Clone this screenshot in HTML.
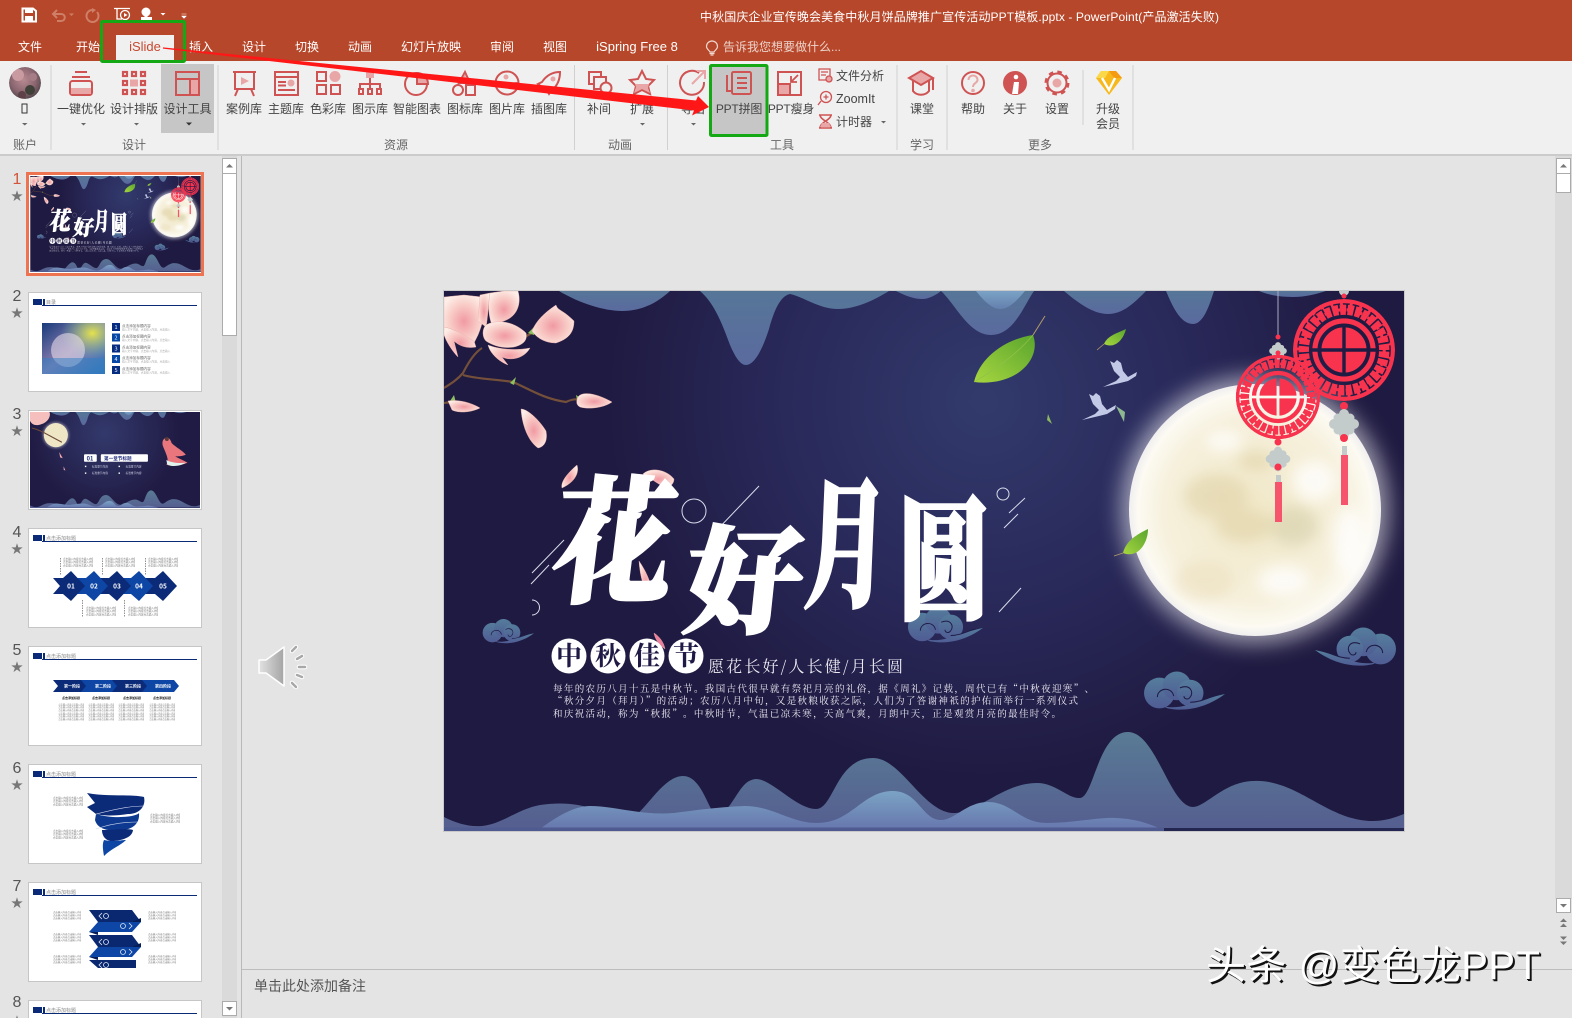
<!DOCTYPE html>
<html lang="zh"><head><meta charset="utf-8"><title>PowerPoint</title>
<style>
html,body{margin:0;padding:0;width:1572px;height:1018px;overflow:hidden;background:#e4e4e4}
#r{position:absolute;left:0;top:0;width:1572px;height:1018px;overflow:hidden;background:#e4e4e4;font-family:"Liberation Sans","Noto Sans CJK SC",sans-serif}
.a{position:absolute}
.th{position:absolute;left:28px;width:174px;height:100px;background:#fff}
.n{position:absolute;left:8px;width:18px;text-align:center;font-size:16px;line-height:16px;color:#555}
.st{position:absolute;left:8px;width:18px;text-align:center;font-size:12px;line-height:12px;color:#777}
</style></head><body><div id="r">
<svg width="0" height="0" style="position:absolute">
<defs>
<radialGradient id="bg" gradientUnits="userSpaceOnUse" cx="540" cy="110" r="400"><stop offset="0" stop-color="#323a6c"/><stop offset=".5" stop-color="#29295a"/><stop offset=".95" stop-color="#1f1a41"/></radialGradient>
<linearGradient id="dr" x1="0" y1="0" x2="0" y2="1"><stop offset="0" stop-color="#567698"/><stop offset="1" stop-color="#5a6a9e"/></linearGradient>
<linearGradient id="dr2" x1="0" y1="0" x2="0" y2="1"><stop offset="0" stop-color="#7ba2c6"/><stop offset="1" stop-color="#6480ad"/></linearGradient>
<linearGradient id="m1" gradientUnits="userSpaceOnUse" x1="0" y1="441" x2="0" y2="535"><stop offset="0" stop-color="#587b95"/><stop offset="1" stop-color="#555f90"/></linearGradient>
<linearGradient id="m2" gradientUnits="userSpaceOnUse" x1="0" y1="500" x2="0" y2="538"><stop offset="0" stop-color="#7ba3c4"/><stop offset="1" stop-color="#6777ae"/></linearGradient>
<linearGradient id="lf" x1="0" y1="1" x2="1" y2="0"><stop offset="0" stop-color="#a7d63f"/><stop offset="1" stop-color="#5aa52e"/></linearGradient>
<linearGradient id="cl" x1="0" y1="0" x2="0" y2="1"><stop offset="0" stop-color="#557d9c"/><stop offset="1" stop-color="#4f5c94"/></linearGradient>
<radialGradient id="pt" cx=".5" cy=".55" r=".6"><stop offset="0" stop-color="#f09aa2"/><stop offset=".6" stop-color="#f9cdc8"/><stop offset="1" stop-color="#fdeee8"/></radialGradient>
<radialGradient id="mn" cx=".5" cy=".5" r=".5"><stop offset="0" stop-color="#f1e8c8"/><stop offset=".72" stop-color="#f6f0dc"/><stop offset=".93" stop-color="#fcfaf2"/><stop offset="1" stop-color="#f1eff0"/></radialGradient>
<radialGradient id="av" cx=".45" cy=".4" r=".65"><stop offset="0" stop-color="#b98a92"/><stop offset=".6" stop-color="#8a6670"/><stop offset="1" stop-color="#4c4248"/></radialGradient>
<filter id="b4"><feGaussianBlur stdDeviation="7"/></filter>
<filter id="b14"><feGaussianBlur stdDeviation="11"/></filter>
<mask id="dm" maskUnits="userSpaceOnUse" x="-53" y="-53" width="106" height="106">
<circle r="52" fill="#fff"/>
<g fill="none">
<circle r="41" stroke="#000" stroke-width="12" stroke-dasharray="1.6 6.2"/>
<circle r="41" stroke="#fff" stroke-width="3.2" stroke-dasharray="5 6.5"/>
<circle r="47" stroke="#000" stroke-width="1.4" stroke-dasharray="7 3"/>
<circle r="34" stroke="#000" stroke-width="3.500"/>
<circle r="25" stroke="#000" stroke-width="4"/>
<path d="M-33 0H33M0-26V26" stroke="#000" stroke-width="3.500"/>
</g></mask>
<symbol id="disk" viewBox="-53 -53 106 106" overflow="visible"><circle r="52" fill="#f8334e" mask="url(#dm)"/></symbol>
<symbol id="knot" viewBox="-17 -17 34 34"><g fill="#c3ccca"><circle cx="-10" r="5"/><circle cx="10" r="5"/><circle cy="-10" r="5"/><circle cy="10" r="5"/><circle r="7"/><circle cx="-6" cy="-6" r="4.5"/><circle cx="6" cy="-6" r="4.5"/><circle cx="-6" cy="6" r="4.5"/><circle cx="6" cy="6" r="4.5"/></g></symbol>
<symbol id="cloudA" viewBox="0 0 80 40"><g fill="url(#cl)"><circle cx="16" cy="21" r="15"/><circle cx="33" cy="14" r="14"/><circle cx="46" cy="21" r="13"/><path d="M20 34C40 38 52 28 80 22C64 34 44 40 24 36Z"/></g><g fill="none" stroke="#1f1b45" stroke-width="1"><path d="M14 25C14 16 28 14 30 24"/><path d="M36 16C46 12 50 20 46 25C44 28 40 27 40 24"/><path d="M46 30C56 30 62 26 72 23"/></g></symbol>
<symbol id="mnt" viewBox="0 0 960 540">
<path fill="url(#m1)" d="M0 526C12 532 24 536 38 535C58 533 74 518 96 514C110 512 122 512 134 514C155 518 172 528 186 527C200 524 218 485 239 485C255 485 262 510 268 519C272 524 280 522 286 514C296 500 300 489 312 488C328 488 352 518 372 518C390 518 392 467 429 467C458 467 480 524 512 522C536 520 560 492 593 492C612 492 624 508 636 507C650 506 654 441 684 441C712 441 726 516 749 516C760 516 776 496 800 491C850 482 880 530 929 530C942 530 952 526 960 523V540H0Z"/>
<path fill="url(#m2)" d="M96 538C112 526 130 515 146 515C170 515 200 525 230 522C260 518 278 516 300 515C330 515 346 532 373 532C408 532 418 500 449 500C474 500 478 528 496 529C510 530 522 511 544 511C568 511 576 532 603 532C630 532 655 526 672 527C695 528 708 534 722 540H96Z"/>
<rect y="536.500" width="720" height="3.500" fill="#4f5a90"/><rect x="720" y="537" width="240" height="3" fill="#252552"/>
</symbol>
<symbol id="drp" viewBox="0 0 960 540">
<path fill="url(#dr)" d="M115 0C135 12 160 20 178 20C200 20 215 10 226 0Z"/>
<path fill="url(#dr)" d="M256 0C270 12 278 32 286 54C292 68 297 74 302 74C310 74 318 60 325 38C330 20 336 5 346 3C360 6 375 18 394 18C415 18 435 6 445 0Z"/>
<path fill="url(#dr)" d="M452 0C462 5 470 8 478 8C485 8 492 4 497 0Z"/>
<path fill="url(#dr)" d="M497 0C512 14 525 44 547 44C570 44 580 14 590 0Z"/>
<path fill="url(#dr2)" d="M532 0C540 10 548 18 556 18C566 18 574 8 581 0Z"/>
<path fill="url(#dr)" d="M620 0C632 10 648 23 664 23C680 23 692 10 702 0Z"/>
<path fill="url(#dr)" d="M722 0C728 14 736 33 749 33C760 33 766 12 770 0Z"/>
<path fill="url(#dr)" d="M815 0C825 4 835 6 849 6C862 6 872 3 882 0Z"/>
</symbol>
<symbol id="slide" viewBox="0 0 960 540">
<rect width="960" height="540" fill="url(#bg)"/>
<use href="#drp" width="960" height="540"/>
<use href="#mnt" width="960" height="540"/>
<!-- clouds -->
<use href="#cloudA" x="38" y="325" width="52" height="32"/>
<use href="#cloudA" x="462" y="316" width="78" height="38"/>
<use href="#cloudA" x="699" y="379" width="82" height="44"/>
<g transform="translate(953,333) scale(-1,1)"><use href="#cloudA" width="82" height="48"/></g>
<!-- moon -->
<circle cx="811" cy="219" r="134" fill="#fff" opacity=".55" filter="url(#b14)"/>
<circle cx="811" cy="219" r="126" fill="url(#mn)"/>
<g filter="url(#b4)" fill="#dccd9e" opacity=".5"><ellipse cx="772" cy="205" rx="32" ry="22"/><ellipse cx="812" cy="170" rx="18" ry="10"/><ellipse cx="850" cy="235" rx="24" ry="20" fill="#cfc9a2"/><ellipse cx="760" cy="290" rx="30" ry="20" fill="#eadcb8"/><ellipse cx="800" cy="235" rx="28" ry="16"/></g>
<g filter="url(#b4)" fill="#fff" opacity=".75"><ellipse cx="870" cy="190" rx="22" ry="20"/><ellipse cx="905" cy="250" rx="16" ry="34"/><ellipse cx="840" cy="290" rx="26" ry="16"/><ellipse cx="780" cy="150" rx="18" ry="10"/></g>
<!-- lanterns -->
<path d="M834 0V45" stroke="#aab" stroke-width="1"/>
<use href="#knot" x="824" y="50" width="20" height="20"/><circle cx="834" cy="46" r="2.500" fill="#f8334e"/><circle cx="834" cy="62" r="2.500" fill="#f8334e"/>
<use href="#disk" x="791" y="63" width="86" height="86"/>
<circle cx="834" cy="151" r="3.500" fill="#f8334e"/>
<use href="#knot" x="820" y="154" width="28" height="28"/>
<circle cx="834" cy="176" r="3.500" fill="#f8334e"/>
<rect x="832" y="184" width="5" height="7" fill="#c3ccca"/><rect x="831" y="191" width="7" height="40" fill="#f6536c"/>
<circle cx="900" cy="0" r="5" fill="#c3ccca"/><circle cx="900" cy="5" r="2.500" fill="#f8334e"/>
<use href="#disk" x="848" y="7" width="104" height="104"/>
<circle cx="900" cy="115" r="4" fill="#f8334e"/>
<use href="#knot" x="883" y="116" width="34" height="34"/>
<circle cx="900" cy="147" r="4" fill="#f8334e"/>
<rect x="898" y="155" width="5" height="9" fill="#c3ccca"/><rect x="897" y="164" width="7" height="50" fill="#f6536c"/>
<!-- leaves, birds -->
<path d="M589 44L601 25" stroke="#b59a6a" stroke-width="1"/>
<path fill="url(#lf)" d="M530 91C536 66 562 48 589 44C598 68 572 96 530 91Z"/><path d="M530 91C552 78 574 62 589 44" stroke="#8fc24a" stroke-width=".7" fill="none"/>
<path fill="url(#lf)" d="M660 53C664 44 674 42 682 38C679 50 670 58 660 53Z"/><path d="M653 59L660 53" stroke="#b59a6a" stroke-width=".8"/>
<path fill="url(#lf)" d="M679 262C682 250 692 244 704 238C704 252 694 268 679 262Z"/><path d="M670 265L679 262" stroke="#b59a6a" stroke-width=".8"/>
<path fill="#8cb860" d="M604 123L608 133L603 129Z"/><path fill="#8cc25a" d="M656 115L662 119L656 121Z"/><path fill="#8db890" d="M672 115L681 121L680 131Z"/>
<g fill="#c2c9e6"><path d="M666 70L670 72L673 69L677 72L679 80L684 86L693 81L692 85L684 90L676 92L659 96L672 90L676 86L670 80Z"/><path d="M645 103L649 105L652 102L656 105L658 113L663 119L672 114L671 118L663 123L655 125L638 129L651 123L655 119L649 113Z"/></g>
<!-- branch & flowers -->
<g fill="none" stroke="#74503a" stroke-width="2.200"><path d="M0 97C8 92 14 88 19 82C24 72 30 62 38 57"/><path d="M19 84C32 88 50 88 69 91C85 98 100 108 122 111C128 108 134 108 138 109"/><path d="M0 112L8 111"/><path d="M66 54L88 42"/></g>
<g fill="#8fc060"><path d="M84 42L92 34L90 44Z"/><path d="M138 108L132 104L134 114L140 116Z"/><path d="M6 110L10 104L12 112Z"/><path d="M66 92L72 86L70 94Z"/></g>
<g fill="url(#pt)" stroke="#eeb0ac" stroke-width=".4">
<path d="M0 6L20 4L38 6C42 16 40 30 34 44L30 52C20 44 10 38 0 36Z"/>
<path d="M0 36C10 38 20 44 30 50L32 56C22 58 14 54 10 50L14 66C8 60 2 50 0 44Z"/>
<path d="M46 2L60 0L74 0C78 14 72 26 60 30L48 34C44 24 44 12 46 2Z"/>
<path d="M36 4L46 2C44 14 44 26 42 36L34 30Z"/>
<path d="M42 34C52 28 70 30 82 42C84 50 78 54 70 56C58 58 48 54 42 50C38 46 38 38 42 34Z"/>
<path d="M44 54C54 58 70 60 86 57C80 68 66 70 58 66L64 74C54 70 46 62 44 54Z"/>
<path d="M88 40C92 30 100 22 112 14C114 20 118 18 130 30C130 42 124 48 112 52C100 52 92 46 88 40Z"/>
<path d="M134 106C138 100 152 102 168 111C158 118 142 118 136 116C132 114 132 110 134 106Z"/>
<path d="M4 110C14 108 28 112 36 117C26 122 14 122 8 119Z"/>
<path d="M77 118C84 118 96 130 102 140C104 150 100 156 94 157C84 150 78 134 77 118Z"/>
<path d="M133 174C135 180 133 190 118 197C116 190 126 180 133 174Z"/>
<path d="M199 183C206 176 222 178 230 188C230 194 224 198 218 195C210 190 204 186 199 183Z"/>
<path d="M195 270C202 280 210 296 208 310C200 300 196 286 195 270Z"/>
<path d="M210 342C216 346 220 352 221 358C215 354 211 348 210 342Z" fill="#ec7f9a"/>
</g>
<!-- decorative lines -->
<g fill="none" stroke="#d9dcec" stroke-width="1"><path d="M273 239L315 195M88 282L120 249M87 293L105 274M565 222L581 207M560 237L574 223M555 321L577 297"/><circle cx="250" cy="220" r="12"/><circle cx="559" cy="203" r="6"/><path d="M88 309A7.500 7.500 0 0 1 88 324"/></g>
<!-- title -->
<g fill="#fff" stroke="#fff" stroke-width="3" font-family="'Noto Serif CJK SC','Noto Sans CJK SC',serif" font-weight="900">
<text transform="translate(105,300) scale(.88,1) skewX(-8)" font-size="136">花</text>
<text transform="translate(238,332) skewX(-6)" font-size="116">好</text>
<text transform="translate(358,304) scale(.6,1) skewX(-4)" font-size="140">月</text>
<text transform="translate(452,317) scale(.72,1)" font-size="132">圆</text>
</g>
<!-- sub title -->
<g fill="#fff"><circle cx="125" cy="365" r="17.500"/><circle cx="164" cy="365" r="17.500"/><circle cx="203" cy="365" r="17.500"/><circle cx="242" cy="365" r="17.500"/></g>
<g fill="#1f1a45" font-size="26" font-weight="700" text-anchor="middle" font-family="'Noto Serif CJK SC',serif"><text x="125" y="374">中</text><text x="164" y="374">秋</text><text x="203" y="374">佳</text><text x="242" y="374">节</text></g>
<g fill="#eceaf2" font-family="'Noto Serif CJK SC',serif">
<text x="264" y="381" font-size="16" textLength="195" lengthAdjust="spacing">愿花长好/人长健/月长圆</text>
<g font-size="9.500"><text x="109" y="401" textLength="541" lengthAdjust="spacing">每年的农历八月十五是中秋节。我国古代很早就有祭祀月亮的礼俗，据《周礼》记载，周代已有“中秋夜迎寒”、</text>
<text x="109" y="413" textLength="525" lengthAdjust="spacing">“秋分夕月（拜月）”的活动；农历八月中旬，又是秋粮收获之际，人们为了答谢神祇的护佑而举行一系列仪式</text>
<text x="109" y="426" textLength="508" lengthAdjust="spacing">和庆祝活动，称为“秋报”。中秋时节，气温已凉未寒，天高气爽，月朗中天，正是观赏月亮的最佳时令。</text></g>
</g>
</symbol>
<symbol id="hd" viewBox="0 0 174 100"><rect x="5" y="7" width="9" height="6" fill="#0a2a78"/><rect x="15" y="7" width="2" height="6" fill="#0a2a78"/><path d="M14 13.500H169" stroke="#0a2a78" stroke-width="1"/></symbol>
<symbol id="tb" viewBox="0 0 30 12"><g font-size="2.600" fill="#777"><text x="0" y="3">点击输入内容点击输入内容点击</text><text x="0" y="6.200">点击输入内容点击输入内容点击</text><text x="0" y="9.400">点击输入内容点击输入内容点击</text></g></symbol>
</defs>
</svg>

<!-- Title bar -->
<div class="a" style="left:0;top:0;width:1572px;height:61px;background:#b7472a"></div>
<div class="a" style="left:0;top:61px;width:1572px;height:93px;background:#f0f0f0"></div>
<div class="a" style="left:0;top:154px;width:1572px;height:2px;background:#cbcbcb"></div>
<div class="a" style="left:116px;top:35px;width:58px;height:26px;background:#f0f0f0"></div>
<div class="a" style="left:161px;top:64px;width:53px;height:69px;background:#c6c6c6"></div>
<div class="a" style="left:711px;top:65px;width:56px;height:70px;background:#c6c6c6"></div>

<svg class="a" style="left:0;top:0" width="1572" height="156" viewBox="0 0 1572 156" font-family="'Liberation Sans','Noto Sans CJK SC',sans-serif">
<defs><clipPath id="avc"><circle cx="25" cy="83" r="16"/></clipPath></defs>
<!-- QAT -->
<g>
<path d="M22.500 8.500H33L36 11V21.500H22.500Z" fill="none" stroke="#fff" stroke-width="2"/><rect x="25" y="9" width="8" height="4" fill="#fff"/><rect x="25" y="16" width="8" height="5" fill="#fff"/>
<g fill="none" stroke="#cf7f68" stroke-width="2"><path d="M53 14H61C66 14 66 21 61 21H57"/><path d="M57 10L53 14L57 18"/><path d="M92 10A6 6 0 1 0 97 12"/></g>
<path d="M69 13.500H74L71.500 16Z" fill="#cf7f68"/><path d="M92 8V13L96 10Z" fill="#cf7f68"/>
<g fill="none" stroke="#fff" stroke-width="1.300"><path d="M114 8.500H130M117 9V19H122"/><circle cx="125" cy="15" r="4.500"/></g><path d="M124 13L127.500 15L124 17Z" fill="#fff"/>
<circle cx="146" cy="12" r="4.500" fill="#fff"/><path d="M144.500 12H147.500V17H152V20H141V17H144.500Z" fill="#fff"/>
<path d="M160.500 13H165.500L163 15.500Z" fill="#fff"/>
<path d="M181.500 14H186.500M181.500 16H186.500L184 18.500Z" fill="#fff" stroke="#fff" stroke-width=".5"/>
</g>
<text x="700" y="21" font-size="12" fill="#fff" textLength="519" lengthAdjust="spacing">中秋国庆企业宣传晚会美食中秋月饼品牌推广宣传活动PPT模板.pptx - PowerPoint(产品激活失败)</text>
<!-- Tabs -->
<g font-size="12" fill="#fff" text-anchor="middle">
<text x="30" y="51">文件</text><text x="88" y="51">开始</text><text x="201" y="51">插入</text><text x="254" y="51">设计</text><text x="307" y="51">切换</text><text x="360" y="51">动画</text><text x="431" y="51">幻灯片放映</text><text x="502" y="51">审阅</text><text x="555" y="51">视图</text><text x="637" y="51" font-size="13">iSpring Free 8</text>
</g>
<text x="145" y="51" font-size="13" fill="#c9482e" text-anchor="middle">iSlide</text>
<g fill="none" stroke="#f0d8d0" stroke-width="1.200"><path d="M710 52C709 50 706.500 49 706.500 46.500A5.500 5.500 0 1 1 717.500 46.500C717.500 49 715 50 714 52Z"/><path d="M709.500 53.500H714.500M710.500 55H713.500"/></g>
<text x="723" y="51" font-size="12" fill="#ecd3ca">告诉我您想要做什么...</text>
<!-- Avatar -->
<g clip-path="url(#avc)"><circle cx="25" cy="83" r="16" fill="url(#av)"/><circle cx="30" cy="90" r="5" fill="#3f4038"/><circle cx="18" cy="75" r="6" fill="#c99aa0"/><circle cx="22" cy="95" r="4" fill="#5d4048"/><circle cx="33" cy="77" r="4" fill="#a67d86"/></g>
<rect x="22" y="104" width="5" height="9" fill="none" stroke="#333" stroke-width="1"/>
<!-- Separators -->
<g stroke="#d0d0d0" stroke-width="1"><path d="M51 65V150M218 65V150M574.500 65V150M667.500 65V150M897 65V150M947 65V150M1133 65V150"/><path d="M1083 70V125"/></g>
<!-- small arrows -->
<g fill="#666"><path d="M22 123H27.500L24.700 125.500Z"/><path d="M81 123H86L83.500 125.500Z"/><path d="M134 123H139L136.500 125.500Z"/><path d="M186 122.500H192L189 125.500Z" fill="#333"/><path d="M640 123H645L642.500 125.500Z"/><path d="M691 123H696L693.500 125.500Z"/><path d="M881 121H886L883.500 123.500Z"/></g>
<!-- Labels -->
<g font-size="12" fill="#444" text-anchor="middle">
<text x="81" y="113">一键优化</text><text x="134" y="113">设计排版</text><text x="187.500" y="113">设计工具</text>
<text x="244" y="113">案例库</text><text x="286" y="113">主题库</text><text x="328" y="113">色彩库</text><text x="370" y="113">图示库</text><text x="417" y="113">智能图表</text><text x="465" y="113">图标库</text><text x="507" y="113">图片库</text><text x="549" y="113">插图库</text>
<text x="599" y="113">补间</text><text x="642" y="113">扩展</text><text x="693" y="113">导出</text>
<text x="739" y="113" letter-spacing="-.2">PPT拼图</text><text x="791" y="113" letter-spacing="-.2">PPT瘦身</text>
<text x="922" y="113">课堂</text><text x="973" y="113">帮助</text><text x="1015" y="113">关于</text><text x="1057" y="113">设置</text><text x="1108" y="113">升级</text><text x="1108" y="128">会员</text>
</g>
<g font-size="12" fill="#444"><text x="836" y="80">文件分析</text><text x="836" y="103" font-size="12.500">ZoomIt</text><text x="836" y="126">计时器</text></g>
<g font-size="12" fill="#666" text-anchor="middle"><text x="25" y="149">账户</text><text x="134" y="149">设计</text><text x="396" y="149">资源</text><text x="620" y="149">动画</text><text x="782" y="149">工具</text><text x="922" y="149">学习</text><text x="1040" y="149">更多</text></g>
<!-- Icons -->
<g fill="none" stroke="#cf5353" stroke-width="2">
<!-- 一键优化 -->
<path d="M75 72H87M72 77H90"/><rect x="70" y="81" width="22" height="14" rx="2.500"/><path d="M71 88H91V94H71Z" fill="#e8a6a6" stroke="none"/>
<!-- 设计工具 -->
<rect x="176" y="72" width="23" height="23"/><path d="M176 79H199M190 79V95"/><rect x="191" y="80" width="7" height="14" fill="#e8a6a6" stroke="none"/>
<!-- 案例库 -->
<path d="M233 72H256M235 72V89H254V72M238 89L235 96M251 89L254 96"/><path d="M241 77L249 81L241 85Z" fill="#e8a6a6" stroke="none"/>
<!-- 主题库 -->
<rect x="275" y="72" width="23" height="23"/><path d="M275 77H298M278 82H286M278 85.500H286M278 90H295"/><circle cx="291" cy="83" r="3.500" fill="#e8a6a6" stroke="none"/>
<!-- 色彩库 -->
<rect x="317" y="72" width="9" height="9"/><rect x="317" y="85" width="9" height="9"/><rect x="331" y="85" width="9" height="9"/><circle cx="335" cy="76.500" r="5.500" fill="#e8a6a6" stroke="none"/>
<!-- 图示库 -->
<rect x="366" y="71" width="8" height="7" fill="#e8a6a6" stroke="none"/><path d="M370 78V83M360 89V84H380V89M370 84V89"/><rect x="359" y="89" width="4" height="5"/><rect x="368" y="89" width="4" height="5"/><rect x="377" y="89" width="4" height="5"/>
<!-- 智能图表 -->
<circle cx="416" cy="84" r="11"/><path d="M417 73A11 11 0 0 1 428 84L417 84Z" fill="#e8a6a6"/>
<!-- 图标库 -->
<path d="M465 72L470 83H459Z"/><circle cx="458" cy="90" r="5"/><rect x="466" y="85" width="9" height="10"/><path d="M465 74L468 83H461Z" fill="#e8a6a6" stroke="none"/>
<!-- 图片库 -->
<circle cx="507" cy="83" r="11.500"/><path d="M496 85L518 83"/><circle cx="506" cy="77" r="2.500" fill="#e8a6a6" stroke="none"/>
<!-- 插图库 -->
<path d="M560 72C552 72 546 76 542 82L538 84L543 88L547 91L549 94L552 90C557 86 560 80 560 72Z"/><circle cx="553" cy="79" r="2.500" fill="#e8a6a6" stroke="none"/>
<!-- 补间 -->
<rect x="589" y="72" width="12" height="12"/><rect x="594" y="77" width="12" height="12" fill="#f0f0f0"/><circle cx="606" cy="88" r="5.500" fill="#f0f0f0"/>
<!-- 扩展 -->
<path d="M642 71L646 79L654 80L648 86L650 94L642 90L634 94L636 86L630 80L638 79Z"/><path d="M635 84H649L648 88L650 93L642 89L634 93L636 87Z" fill="#e8a6a6" stroke="none"/>
<!-- 导出 -->
<path d="M699 73A12 12 0 1 0 704 82"/><g stroke="#e8a6a6"><path d="M692 84L704 72M697 71H705V79"/></g>
<!-- PPT拼图 -->
<rect x="732" y="72" width="19" height="22" rx="1.500"/><path d="M727 75V91H732"/><path d="M737 78H747M737 83H747M737 88H747"/>
<!-- PPT瘦身 -->
<rect x="778" y="72" width="23" height="23"/><rect x="779" y="85" width="10" height="9" fill="#e8a6a6" stroke="none"/><path d="M778 84H790V95"/><path d="M798 75L791 82M791 76V82H797" stroke-width="1.800"/>
<!-- 课堂 -->
<path d="M921 71L933 78L921 85L909 78Z" fill="#e8a6a6"/><path d="M913 81V91C917 96 925 96 929 91V81M933 78V90"/>
<!-- 帮助 -->
<circle cx="973" cy="83" r="11"/><path d="M968.500 80C968.500 74 977.500 74 977.500 80C977.500 83 973 83 973 87" stroke="#e8a6a6"/><circle cx="973" cy="90.500" r=".8" stroke="#e8a6a6"/>
<!-- 设置 -->
<circle cx="1057" cy="83" r="9.500"/><circle cx="1057" cy="83" r="11" stroke-width="3" stroke-dasharray="4.500 4.140"/>
</g>
<!-- 设计排版 -->
<g fill="none" stroke="#cf5353" stroke-width="2.200"><rect x="123" y="72" width="4" height="4"/><rect x="132" y="72" width="4" height="4"/><rect x="141" y="72" width="4" height="4"/><rect x="123" y="81" width="4" height="4"/><rect x="141" y="81" width="4" height="4"/><rect x="123" y="90" width="4" height="4"/><rect x="132" y="90" width="4" height="4"/><rect x="141" y="90" width="4" height="4"/></g>
<rect x="130" y="79.500" width="8" height="7" fill="#e8a6a6"/>
<circle cx="1057" cy="83" r="4.500" fill="#e8a6a6"/>
<circle cx="1015" cy="83" r="12" fill="#cf5353"/><circle cx="1016" cy="77" r="2.300" fill="#fff"/><path d="M1012 94L1014 82H1019L1018 94Z" fill="#fff"/>
<!-- small icons -->
<g fill="none" stroke="#cf5353" stroke-width="1.300"><path d="M819 69H830V80H819Z"/><path d="M821 72H828M821 75H826" /><circle cx="829" cy="79" r="3" fill="#e8a6a6"/>
<circle cx="826" cy="97" r="5.500"/><path d="M821 101L818 105M823.500 97H828.500M826 94.500V99.500" /><path d="M819 115H832M819 128H832M820 115C820 120 831 122 831 128M831 115C831 120 820 122 820 128" stroke-width="1.500"/></g><path d="M822 123H829L831 127H820Z" fill="#e8a6a6"/>
<!-- Diamond -->
<path d="M1096 78L1101 71H1116L1122 78L1109 95Z" fill="#f7b81b"/><path d="M1101 71H1109L1105 78H1096Z" fill="#fbd84a"/><path d="M1109 71H1116L1122 78H1114Z" fill="#f59b12"/><path d="M1102 78L1109 90L1115 78" fill="none" stroke="#fff" stroke-width="2.400"/>
<!-- green rects -->
<g fill="none" stroke="#14a814" stroke-width="3"><rect x="101.500" y="21.500" width="83" height="40" rx="1"/><rect x="710.500" y="65.500" width="56.500" height="70" rx="1"/></g>
<!-- red arrow -->
<path d="M163 47.400L696 100.500L698 96L709 107L692 115.500L694 110.500L163 48.600Z" fill="#ff1717"/>
</svg>

<!-- Left pane -->
<div class="n" style="top:172px;color:#d2553a">1</div><div class="st" style="top:190px">★</div>
<div class="n" style="top:289px">2</div><div class="st" style="top:307px">★</div>
<div class="n" style="top:407px">3</div><div class="st" style="top:425px">★</div>
<div class="n" style="top:525px">4</div><div class="st" style="top:543px">★</div>
<div class="n" style="top:643px">5</div><div class="st" style="top:661px">★</div>
<div class="n" style="top:761px">6</div><div class="st" style="top:779px">★</div>
<div class="n" style="top:879px">7</div><div class="st" style="top:897px">★</div>
<div class="n" style="top:995px">8</div>
<div class="a" style="left:8px;top:1015px;width:18px;height:3px;overflow:hidden"><div style="width:18px;text-align:center;font-size:12px;line-height:12px;color:#777">★</div></div>

<!-- thumb 1 -->
<div class="a" style="left:26px;top:172px;width:172px;height:98px;border:3px solid #ee7350;background:#fff;padding:0"></div>
<svg class="a" style="left:30px;top:176px" width="171" height="96" viewBox="0 0 960 540"><use href="#slide" width="960" height="540"/></svg>

<!-- thumb 2 -->
<div class="th" style="top:292px;box-shadow:inset 0 0 0 1px #c6c6c6"><svg width="174" height="100" viewBox="0 0 174 100" font-family="'Noto Sans CJK SC',sans-serif"><use href="#hd" width="174" height="100"/><text x="18" y="12" font-size="5" fill="#888">目录</text>
<defs><linearGradient id="g2" x1="0" y1="0" x2="1" y2="1"><stop offset="0" stop-color="#173a7a"/><stop offset=".5" stop-color="#8c7fb0"/><stop offset="1" stop-color="#2a74b8"/></linearGradient><radialGradient id="g3" cx=".8" cy=".2" r=".5"><stop offset="0" stop-color="#e6e24a"/><stop offset="1" stop-color="#6bb8a0" stop-opacity="0"/></radialGradient></defs>
<rect x="14" y="31" width="63" height="51" fill="url(#g2)"/><rect x="14" y="31" width="63" height="51" fill="url(#g3)"/><circle cx="40" cy="58" r="17" fill="#e4dbe8" opacity=".6"/><rect x="14" y="66" width="63" height="16" fill="#2f7fc4" opacity=".5"/>
<g fill="#052c80"><rect x="84" y="31" width="8" height="8"/><rect x="84" y="41.500" width="8" height="8" fill="#0747a6"/><rect x="84" y="52.500" width="8" height="8"/><rect x="84" y="63" width="8" height="8" fill="#0747a6"/><rect x="84" y="74" width="8" height="8"/></g>
<g fill="#fff" font-size="5.500" text-anchor="middle"><text x="88" y="37">1</text><text x="88" y="47.500">2</text><text x="88" y="58.500">3</text><text x="88" y="69">4</text><text x="88" y="80">5</text></g>
<g font-size="3.600" fill="#666"><text x="94" y="35">点击添加标题内容</text><text x="94" y="45.500">点击添加标题内容</text><text x="94" y="56.500">点击添加标题内容</text><text x="94" y="67">点击添加标题内容</text><text x="94" y="78">点击添加标题内容</text></g>
<g font-size="2.700" fill="#aaa"><text x="94" y="38.500">输入文字内容，点击输入内容，点击输入</text><text x="94" y="49">输入文字内容，点击输入内容，点击输入</text><text x="94" y="60">输入文字内容，点击输入内容，点击输入</text><text x="94" y="70.500">输入文字内容，点击输入内容，点击输入</text><text x="94" y="81.500">输入文字内容，点击输入内容，点击输入</text></g>
</svg></div>

<!-- thumb 3 -->
<div class="th" style="top:410px;box-shadow:inset 0 0 0 1px #c6c6c6"><svg class="a" style="left:2px;top:2px" width="170" height="96" viewBox="0 0 960 540" preserveAspectRatio="none" font-family="'Noto Sans CJK SC',sans-serif">
<defs><radialGradient id="bg3" gradientUnits="userSpaceOnUse" cx="420" cy="120" r="420"><stop offset="0" stop-color="#33396c"/><stop offset="1" stop-color="#201b44"/></radialGradient></defs>
<rect width="960" height="540" fill="url(#bg3)"/><use href="#drp" width="960" height="540"/><use href="#mnt" width="960" height="540"/>
<circle cx="146" cy="130" r="74" fill="#fff" opacity=".4" filter="url(#b4)"/><circle cx="146" cy="130" r="68" fill="#efe6c6"/>
<g fill="#f5bfbe"><path d="M0 0H110C120 25 100 60 60 70C30 80 10 70 0 50Z"/></g><path d="M10 90C60 100 100 130 180 170" stroke="#6e4a38" stroke-width="6" fill="none"/><path d="M165 225L185 260L170 255Z" fill="#f3a8b0"/><path d="M190 305L200 330L190 325Z" fill="#f3a8b0"/>
<rect x="305" y="238" width="72" height="42" rx="5" fill="#fff"/><rect x="400" y="238" width="266" height="42" rx="5" fill="#fff"/>
<text x="320" y="272" font-size="32" font-weight="700" fill="#1d2a7c">01</text><text x="418" y="270" font-size="26" font-weight="700" fill="#1d2a7c">第一章节标题</text>
<g font-size="15" fill="#cfcfe4"><text x="350" y="312">标准章节内容</text><text x="540" y="312">标准章节内容</text><text x="350" y="350">标准章节内容</text><text x="540" y="350">标准章节内容</text></g>
<g fill="#fff"><rect x="310" y="302" width="8" height="8"/><rect x="500" y="302" width="8" height="8"/><rect x="310" y="340" width="8" height="8"/><rect x="500" y="340" width="8" height="8"/></g>
<path d="M760 150C775 130 795 155 800 175C825 200 860 215 880 240C860 250 835 250 820 250L890 285C860 300 800 310 770 295C790 270 765 230 750 190C745 170 750 155 760 150Z" fill="#e8767c"/><path d="M770 270C800 285 840 290 880 285C850 305 800 310 775 295Z" fill="#dff2ee"/><circle cx="773" cy="152" r="11" fill="#5a3a38"/>
</svg></div>

<!-- thumb 4 -->
<div class="th" style="top:528px;box-shadow:inset 0 0 0 1px #c6c6c6"><svg width="174" height="100" viewBox="0 0 174 100" font-family="'Noto Sans CJK SC',sans-serif"><use href="#hd" width="174" height="100"/><text x="18" y="12" font-size="5" fill="#888">点击添加标题</text>
<g><path fill="#0b2a78" d="M113 50L127 50L135 43L149 58L135 73L127 66L113 66L120 58Z"/><path fill="#0d46a4" d="M89 50L103 50L111 43L125 58L111 73L103 66L89 66L96 58Z"/><path fill="#0b2a78" d="M67 50L81 50L89 43L103 58L89 73L81 66L67 66L74 58Z"/><path fill="#0d46a4" d="M44 50L58 50L66 43L80 58L66 73L58 66L44 66L51 58Z"/><path fill="#0b2a78" d="M25 50L35 50L43 43L57 58L43 73L35 66L25 66L32 58Z"/></g>
<g fill="#fff" font-size="6.500" font-weight="700" text-anchor="middle"><text x="43" y="60.500">01</text><text x="66" y="60.500">02</text><text x="89" y="60.500">03</text><text x="111" y="60.500">04</text><text x="135" y="60.500">05</text></g>
<g stroke="#777" stroke-width=".8" stroke-dasharray="1.500 1"><path d="M32.500 30V47M74.500 30V47M117.500 30V47M54.500 72V89M96.500 72V89"/></g>
<use href="#tb" x="35" y="29" width="30" height="12"/><use href="#tb" x="77" y="29" width="30" height="12"/><use href="#tb" x="120" y="29" width="30" height="12"/><use href="#tb" x="58" y="78" width="30" height="12"/><use href="#tb" x="100" y="78" width="30" height="12"/>
</svg></div>

<!-- thumb 5 -->
<div class="th" style="top:646px;box-shadow:inset 0 0 0 1px #c6c6c6"><svg width="174" height="100" viewBox="0 0 174 100" font-family="'Noto Sans CJK SC',sans-serif"><use href="#hd" width="174" height="100"/><text x="18" y="12" font-size="5" fill="#888">点击添加标题</text>
<path fill="#0b2a78" d="M25 34H54L60 40L54 46H25L30 40Z"/><path fill="#0d46a4" d="M53 34H85L90 40L85 46H53L58 40Z"/><path fill="#0b2a78" d="M84 34H115L120 40L115 46H84L89 40Z"/><path fill="#0d46a4" d="M114 34H146L151 40L146 46H114L119 40Z"/>
<g fill="#fff" font-size="4" font-weight="700" text-anchor="middle"><text x="44" y="41.500">第一阶段</text><text x="75" y="41.500">第二阶段</text><text x="105" y="41.500">第三阶段</text><text x="135" y="41.500">第四阶段</text></g>
<g font-size="3" font-weight="700" fill="#222" text-anchor="middle"><text x="43" y="53">点击添加标题</text><text x="73" y="53">点击添加标题</text><text x="104" y="53">点击添加标题</text><text x="134" y="53">点击添加标题</text></g>
<use href="#tb" x="30" y="57" width="26" height="10"/><use href="#tb" x="60" y="57" width="26" height="10"/><use href="#tb" x="90" y="57" width="26" height="10"/><use href="#tb" x="121" y="57" width="26" height="10"/>
<use href="#tb" x="30" y="66" width="26" height="10"/><use href="#tb" x="60" y="66" width="26" height="10"/><use href="#tb" x="90" y="66" width="26" height="10"/><use href="#tb" x="121" y="66" width="26" height="10"/>
</svg></div>

<!-- thumb 6 -->
<div class="th" style="top:764px;box-shadow:inset 0 0 0 1px #c6c6c6"><svg width="174" height="100" viewBox="0 0 174 100" font-family="'Noto Sans CJK SC',sans-serif"><use href="#hd" width="174" height="100"/><text x="18" y="12" font-size="5" fill="#888">点击添加标题</text>
<path fill="#0b2a78" d="M59 29C80 33 105 30 116 33C118 42 112 50 100 50C88 52 75 52 68 50L59 43L67 39Z"/><path fill="#0d3a90" d="M68 50C88 56 110 52 111 49C112 60 104 65 95 66C84 67 70 67 67 56Z"/><path fill="#0b2a78" d="M74 66C85 66 99 64 105 66C104 74 94 76 86 77C78 78 74 72 74 66Z"/><path fill="#0d46a4" d="M76 76C84 78 94 76 98 76C92 82 84 84 76 92C75 86 74 80 76 76Z"/>
<path d="M68 50C85 46 100 42 116 42M68 65C82 60 95 58 110 58" stroke="#cfd8ee" stroke-width=".6" fill="none"/>
<use href="#tb" x="25" y="31" width="30" height="14"/><use href="#tb" x="25" y="64" width="30" height="14"/><use href="#tb" x="122" y="48" width="30" height="14"/>
</svg></div>

<!-- thumb 7 -->
<div class="th" style="top:882px;box-shadow:inset 0 0 0 1px #c6c6c6"><svg width="174" height="100" viewBox="0 0 174 100"><use href="#hd" width="174" height="100"/><text x="18" y="12" font-size="5" fill="#888" font-family="'Noto Sans CJK SC',sans-serif">点击添加标题</text>
<path fill="#0a2870" d="M61 28H104L113 40H70Z"/><path fill="#0d46a4" d="M70 40H113L104 50H61Z"/><path fill="#0a2870" d="M61 53H104L113 65H70Z"/><path fill="#0d46a4" d="M70 65H113L104 75H61Z"/><path fill="#0a2870" d="M61 78H108V86H70Z"/>
<path fill="#061e55" d="M104 40H113V36ZM61 50H70V53ZM104 65H113V61ZM61 75H70V78Z"/>
<g fill="none" stroke="#dfe6f5" stroke-width=".8"><path d="M74 31L71 34L74 37M101 41L104 44L101 47M74 57L71 60L74 63M101 67L104 70L101 73M74 80L71 83L74 86"/><circle cx="78" cy="34" r="2.500"/><circle cx="95" cy="44" r="2.500"/><circle cx="78" cy="60" r="2.500"/><circle cx="95" cy="70" r="2.500"/><circle cx="78" cy="83" r="2.500"/></g>
<use href="#tb" x="25" y="28" width="28" height="12"/><use href="#tb" x="25" y="50" width="28" height="12"/><use href="#tb" x="25" y="72" width="28" height="12"/><use href="#tb" x="120" y="28" width="28" height="12"/><use href="#tb" x="120" y="50" width="28" height="12"/><use href="#tb" x="120" y="72" width="28" height="12"/>
</svg></div>

<!-- thumb 8 -->
<div class="th" style="top:1000px;height:18px;overflow:hidden;box-shadow:inset 0 1px 0 #c6c6c6,inset 1px 0 0 #c6c6c6,inset -1px 0 0 #c6c6c6"><svg width="174" height="18" viewBox="0 0 174 18" style="display:block"><rect x="5" y="7" width="9" height="6" fill="#0a2a78"/><rect x="15" y="7" width="2" height="6" fill="#0a2a78"/><path d="M14 13.500H169" stroke="#0a2a78" stroke-width="1"/><text x="18" y="12" font-size="5" fill="#888" font-family="'Noto Sans CJK SC',sans-serif">点击添加标题</text></svg></div>

<!-- Thumb scrollbar -->
<div class="a" style="left:222px;top:156px;width:15px;height:862px;background:#dadada"></div>
<div class="a" style="left:222px;top:158px;width:13px;height:14px;background:#fff;border:1px solid #ababab"></div>
<svg class="a" style="left:222px;top:158px" width="15" height="15"><path d="M4 9.500L7.500 6L11 9.500Z" fill="#777"/></svg>
<div class="a" style="left:222px;top:173px;width:13px;height:161px;background:#fff;border:1px solid #ababab"></div>
<div class="a" style="left:222px;top:1001px;width:13px;height:13px;background:#fff;border:1px solid #ababab"></div>
<svg class="a" style="left:222px;top:1001px" width="15" height="15"><path d="M4 6L7.500 9.500L11 6Z" fill="#777"/></svg>
<div class="a" style="left:241px;top:156px;width:1px;height:862px;background:#b9b9b9"></div>

<!-- Main slide -->
<svg class="a" style="left:443px;top:290px" width="962" height="542"><rect x=".5" y=".5" width="961" height="541" fill="none" stroke="#c9c9c9"/></svg>
<svg class="a" style="left:444px;top:291px" width="960" height="540" viewBox="0 0 960 540"><use href="#slide" width="960" height="540"/></svg>

<!-- Speaker -->
<svg class="a" style="left:254px;top:642px" width="58" height="52" viewBox="0 0 58 52">
<defs><linearGradient id="sp" x1="0" y1="0" x2="1" y2="0"><stop offset="0" stop-color="#e2e2e2"/><stop offset="1" stop-color="#a4a4a4"/></linearGradient></defs>
<path d="M5 18H12L30 5V44L12 31H5Z" fill="url(#sp)" stroke="#fff" stroke-width="1.500" stroke-linejoin="round"/>
<g stroke="#fff" stroke-width="4.500" stroke-linecap="round"><path d="M38 9L42 5M43 17L48 14M45 25H51M43 33L48 35M38 41L42 45"/></g>
<g stroke="#a8a8a8" stroke-width="2.500" stroke-linecap="round"><path d="M38 9L42 5M43 17L48 14M45 25H51M43 33L48 35M38 41L42 45"/></g>
</svg>

<!-- Main scrollbar -->
<div class="a" style="left:1555px;top:156px;width:17px;height:743px;background:#dadada"></div>
<div class="a" style="left:1556px;top:158px;width:13px;height:14px;background:#fff;border:1px solid #ababab"></div>
<svg class="a" style="left:1556px;top:158px" width="15" height="15"><path d="M4 9.500L7.500 6L11 9.500Z" fill="#777"/></svg>
<div class="a" style="left:1556px;top:173px;width:13px;height:18px;background:#fff;border:1px solid #ababab"></div>
<div class="a" style="left:1556px;top:898px;width:13px;height:13px;background:#fff;border:1px solid #ababab"></div>
<svg class="a" style="left:1556px;top:898px" width="15" height="15"><path d="M4 6L7.500 9.500L11 6Z" fill="#777"/></svg>
<svg class="a" style="left:1556px;top:916px" width="15" height="32"><path d="M4 6L7.500 2.500L11 6ZM4 11L7.500 7.500L11 11Z" fill="#777"/><path d="M4 20.500L7.500 24L11 20.500ZM4 25.500L7.500 29L11 25.500Z" fill="#777"/></svg>

<!-- Notes -->
<div class="a" style="left:242px;top:969px;width:1330px;height:1px;background:#bdbdbd"></div>
<div class="a" style="left:254px;top:976px;font-size:14px;line-height:20px;color:#555;white-space:nowrap">单击此处添加备注</div>

<!-- Watermark -->
<div class="a" style="left:1206px;top:941px;font-size:40px;line-height:50px;letter-spacing:.5px;color:#fff;white-space:nowrap;text-shadow:2px 2px 0 #111,1px 1px 0 #111;font-family:'Liberation Sans','Noto Sans CJK SC',sans-serif">头条 @变色龙PPT</div>
</div></body></html>
